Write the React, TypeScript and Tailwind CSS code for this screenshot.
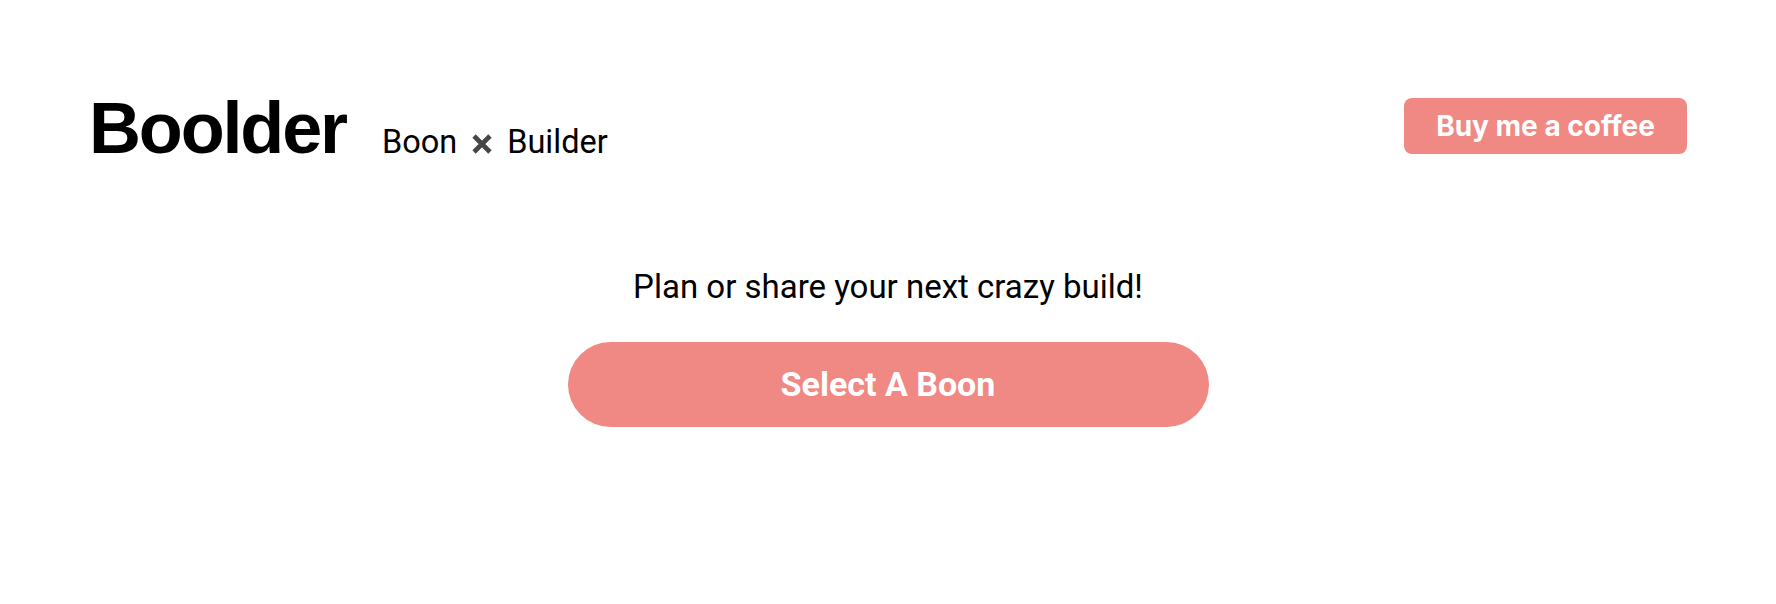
import React from "react";

export default function App() {
  return (
    <div className="min-h-screen w-full bg-white text-black">
      <header className="flex items-start justify-between px-[89px] pt-[92px]">
        <div className="flex items-baseline">
          <h1 className="font-['Liberation_Sans',Arial,sans-serif] text-[72px] font-bold leading-none tracking-[-0.03em]">
            Boolder
          </h1>
          <div className="ml-[36px] flex items-baseline font-['Roboto',sans-serif] text-[32.5px] leading-none">
            <span>Boon</span>
            <svg
              viewBox="0 0 16 16"
              className="mx-[14px] h-[22px] w-[22px] self-center translate-y-[2px] text-[#464646]"
              aria-hidden="true"
            >
              <path d="M2.2 2.2 L13.8 13.8 M13.8 2.2 L2.2 13.8" stroke="currentColor" strokeWidth="3.4" strokeLinecap="butt" fill="none" />
            </svg>
            <span>Builder</span>
          </div>
        </div>
        <button className="mt-[6px] flex h-[56px] w-[283px] items-center justify-center rounded-[8px] bg-[#f08884] font-['Inter',sans-serif] text-[28px] font-bold text-white">
          Buy me a coffee
        </button>
      </header>
      <main className="flex flex-col items-center pt-[106px]">
        <p className="font-['Roboto',sans-serif] text-[33px] leading-none">
          Plan or share your next crazy build!
        </p>
        <button className="mt-[39px] flex h-[85px] w-[641px] items-center justify-center rounded-full bg-[#f08884] font-['Roboto',sans-serif] text-[34px] font-bold text-white">
          Select A Boon
        </button>
      </main>
    </div>
  );
}
